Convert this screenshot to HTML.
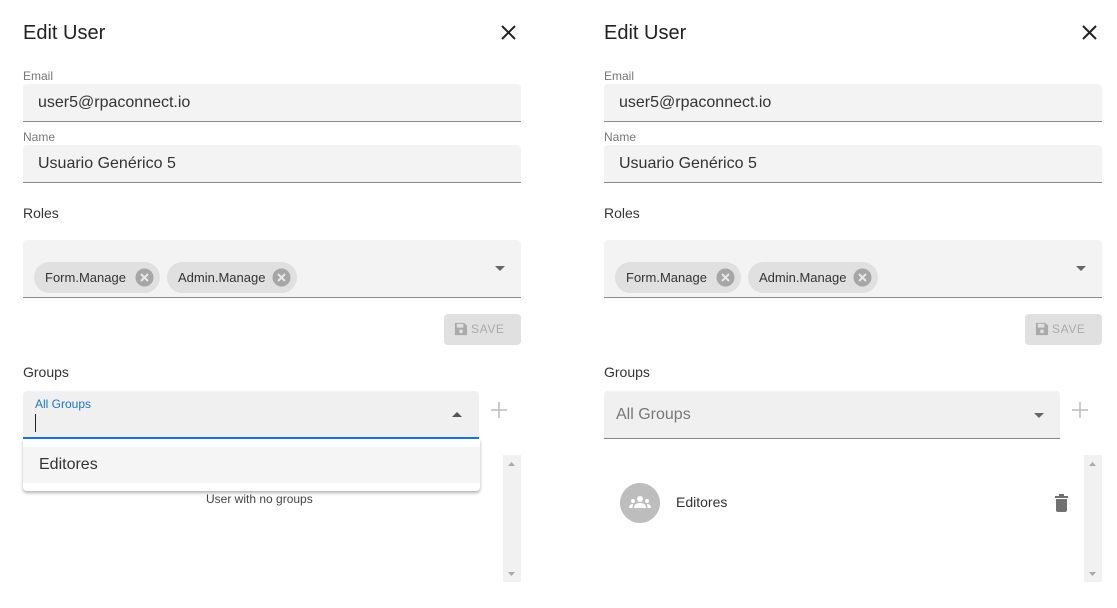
<!DOCTYPE html>
<html><head><meta charset="utf-8">
<style>
*{box-sizing:border-box;margin:0;padding:0}
body{width:1117px;height:608px;background:#fff;font-family:"Liberation Sans",sans-serif;position:relative;overflow:hidden;color:#222}
.p{position:absolute;top:0;width:540px;height:608px}
.a{position:absolute;white-space:nowrap}
.title{left:23px;top:22px;font-size:20px;color:#222}
.lbl{font-size:12px;color:#777;left:23px}
.fld{left:23px;width:498px;background:#f3f3f3;border-bottom:1px solid #8a8a8a;border-radius:4px 4px 0 0}
.ft{position:absolute;left:15px;font-size:16px;color:#333}
.h{font-size:14px;color:#333;left:23px}
.chip{top:262px;height:31px;border-radius:16px;background:#e0e0e0;font-size:13px;color:#333;line-height:31px;padding-left:11px}
.chip svg{position:absolute;right:6px;top:6px}
.sb{width:18px;background:#f1f1f1;top:455px;height:127px;left:503px}
.save{left:444px;top:314px;width:77px;height:31px;background:#e0e0e0;border-radius:4px}
.savet{left:471px;top:322px;font-size:12px;color:#aaa;letter-spacing:.6px}
</style></head><body>

<div class="p" style="left:0">
<div class="a title">Edit User</div>
<svg class="a" style="left:500px;top:24px" width="17" height="17" viewBox="0 0 17 17"><path d="M2 2L15 15M15 2L2 15" stroke="#222" stroke-width="2"/></svg>
<div class="a lbl" style="top:69px">Email</div>
<div class="a fld" style="top:84px;height:38px"><div class="ft" style="top:10px">user5@rpaconnect.io</div></div>
<div class="a lbl" style="top:130px">Name</div>
<div class="a fld" style="top:145px;height:38px"><div class="ft" style="top:10px">Usuario Genérico 5</div></div>
<div class="a h" style="top:205px">Roles</div>
<div class="a fld" style="top:240px;height:58px"></div>
<div class="a chip" style="left:34px;width:126px">Form.Manage<svg width="19" height="19" viewBox="0 0 19 19"><circle cx="9.5" cy="9.5" r="9" fill="#a6a6a6"/><path d="M6 6L13 13M13 6L6 13" stroke="#e8e8e8" stroke-width="2"/></svg></div>
<div class="a chip" style="left:167px;width:130px">Admin.Manage<svg width="19" height="19" viewBox="0 0 19 19"><circle cx="9.5" cy="9.5" r="9" fill="#a6a6a6"/><path d="M6 6L13 13M13 6L6 13" stroke="#e8e8e8" stroke-width="2"/></svg></div>
<svg class="a" style="left:495px;top:266px" width="10" height="5"><path d="M0 0H10L5 5Z" fill="#666"/></svg>
<div class="a save"></div><div class="a savet">SAVE</div>
<svg class="a" style="left:454px;top:322px" width="14" height="14" viewBox="0 0 15 15"><path d="M1 1H11L14 4V14H1Z" fill="#aaa"/><rect x="3" y="2" width="7" height="4" fill="#e0e0e0"/><circle cx="7.5" cy="10" r="2" fill="#e0e0e0"/></svg>
<div class="a h" style="top:364px">Groups</div>
<div class="a" style="left:23px;top:391px;width:456px;height:48px;background:#f0f0f0;border-bottom:2px solid #1976d2;border-radius:4px 4px 0 0"></div>
<div class="a" style="left:35px;top:397px;font-size:12px;color:#1976d2">All Groups</div>
<div class="a" style="left:35px;top:414px;width:1px;height:18px;background:#222"></div>
<svg class="a" style="left:452px;top:412px" width="10" height="5"><path d="M0 5H10L5 0Z" fill="#555"/></svg>
<svg class="a" style="left:491px;top:402px" width="16" height="16"><path d="M8 0V16M0 8H16" stroke="#bbb" stroke-width="1.5"/></svg>
<div class="a sb"></div>
<svg class="a" style="left:508px;top:462px" width="7" height="4"><path d="M0 4H7L3.5 0Z" fill="#aaa"/></svg>
<svg class="a" style="left:508px;top:572px" width="7" height="4"><path d="M0 0H7L3.5 4Z" fill="#aaa"/></svg>
<div class="a" style="left:206px;top:492px;font-size:12px;color:#444">User with no groups</div>
<div class="a" style="left:23px;top:439px;width:457px;height:52px;background:#fff;border-radius:0 0 4px 4px;box-shadow:0 2px 3px rgba(0,0,0,.3)"></div>
<div class="a" style="left:23px;top:447px;width:457px;height:36px;background:#f5f5f5"></div>
<div class="a" style="left:39px;top:456px;font-size:16px;color:#333">Editores</div>
</div>

<div class="p" style="left:581px">
<div class="a title">Edit User</div>
<svg class="a" style="left:500px;top:24px" width="17" height="17" viewBox="0 0 17 17"><path d="M2 2L15 15M15 2L2 15" stroke="#222" stroke-width="2"/></svg>
<div class="a lbl" style="top:69px">Email</div>
<div class="a fld" style="top:84px;height:38px"><div class="ft" style="top:10px">user5@rpaconnect.io</div></div>
<div class="a lbl" style="top:130px">Name</div>
<div class="a fld" style="top:145px;height:38px"><div class="ft" style="top:10px">Usuario Genérico 5</div></div>
<div class="a h" style="top:205px">Roles</div>
<div class="a fld" style="top:240px;height:58px"></div>
<div class="a chip" style="left:34px;width:126px">Form.Manage<svg width="19" height="19" viewBox="0 0 19 19"><circle cx="9.5" cy="9.5" r="9" fill="#a6a6a6"/><path d="M6 6L13 13M13 6L6 13" stroke="#e8e8e8" stroke-width="2"/></svg></div>
<div class="a chip" style="left:167px;width:130px">Admin.Manage<svg width="19" height="19" viewBox="0 0 19 19"><circle cx="9.5" cy="9.5" r="9" fill="#a6a6a6"/><path d="M6 6L13 13M13 6L6 13" stroke="#e8e8e8" stroke-width="2"/></svg></div>
<svg class="a" style="left:495px;top:266px" width="10" height="5"><path d="M0 0H10L5 5Z" fill="#666"/></svg>
<div class="a save"></div><div class="a savet">SAVE</div>
<svg class="a" style="left:454px;top:322px" width="14" height="14" viewBox="0 0 15 15"><path d="M1 1H11L14 4V14H1Z" fill="#aaa"/><rect x="3" y="2" width="7" height="4" fill="#e0e0e0"/><circle cx="7.5" cy="10" r="2" fill="#e0e0e0"/></svg>
<div class="a h" style="top:364px">Groups</div>
<div class="a" style="left:23px;top:391px;width:456px;height:48px;background:#f0f0f0;border-bottom:1px solid #888;border-radius:4px 4px 0 0"></div>
<div class="a" style="left:35px;top:406px;font-size:16px;color:#777">All Groups</div>
<svg class="a" style="left:453px;top:413px" width="10" height="5"><path d="M0 0H10L5 5Z" fill="#666"/></svg>
<svg class="a" style="left:491px;top:402px" width="16" height="16"><path d="M8 0V16M0 8H16" stroke="#bbb" stroke-width="1.5"/></svg>
<div class="a sb"></div>
<svg class="a" style="left:508px;top:462px" width="7" height="4"><path d="M0 4H7L3.5 0Z" fill="#aaa"/></svg>
<svg class="a" style="left:508px;top:572px" width="7" height="4"><path d="M0 0H7L3.5 4Z" fill="#aaa"/></svg>
<svg class="a" style="left:39px;top:483px" width="40" height="40" viewBox="0 0 40 40"><circle cx="20" cy="20" r="20" fill="#bdbdbd"/><g fill="#fff"><circle cx="20" cy="16" r="3"/><circle cx="13" cy="18" r="2"/><circle cx="27" cy="18" r="2"/><path d="M14 25Q14 20 20 20Q26 20 26 25Z"/><path d="M9 25Q9 21 13 21L12.5 25Z"/><path d="M31 25Q31 21 27 21L27.5 25Z"/></g></svg>
<div class="a" style="left:95px;top:494px;font-size:14px;color:#333">Editores</div>
<svg class="a" style="left:474px;top:494px" width="13" height="18" viewBox="0 0 13 18"><rect x="0" y="2" width="13" height="2" fill="#707070"/><rect x="4" y="0" width="5" height="2" fill="#707070"/><path d="M1 5H12V16Q12 18 10 18H3Q1 18 1 16Z" fill="#707070"/></svg>
</div>
</body></html>
